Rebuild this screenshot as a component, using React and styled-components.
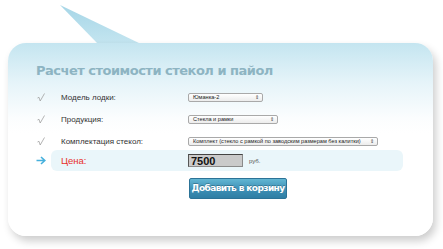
import React from 'react';
import styled, { createGlobalStyle } from 'styled-components';

const GlobalStyle = createGlobalStyle`
  html, body {
    margin: 0;
    padding: 0;
    background: #fff;
    font-family: "Liberation Sans", Arial, sans-serif;
  }
`;

const Page = styled.div`
  position: relative;
  width: 443px;
  height: 249px;
  padding: 43px 0 0 8px;
  box-sizing: border-box;
`;

const Tail = styled.svg`
  position: absolute;
  left: 58px;
  top: 3px;
`;

const Card = styled.div`
  position: relative;
  width: 425px;
  height: 193px;
  box-sizing: border-box;
  padding: 18px 0 0 28px;
  border-radius: 18px;
  background: linear-gradient(#c4e5f0 0, #e6f4f9 40px, #fbfdfe 75px, #fff 90px);
  box-shadow: 3px 5px 9px rgba(0, 0, 0, 0.2);
`;

const Title = styled.h1`
  margin: 0 0 6px;
  height: 19px;
  font-family: "DejaVu Sans", Verdana, sans-serif;
  font-size: 13px;
  font-weight: bold;
  letter-spacing: -0.5px;
  line-height: 19px;
  color: #8db4c2;
`;

const Row = styled.div`
  display: grid;
  grid-template-columns: 25px 127px auto;
  align-items: center;
  height: 22px;
  font-size: 8px;
  color: #333;
`;

const Check = styled.svg`
  display: block;
  margin-left: 1px;
`;

const Select = styled.div`
  display: flex;
  align-items: center;
  justify-content: space-between;
  width: ${p => p.$w}px;
  height: 9px;
  box-sizing: border-box;
  padding: 0 3px 0 4px;
  border: 1px solid #a9a9a9;
  border-radius: 2px;
  background: linear-gradient(#fff, #ececec);
  font-size: 5.6px;
  color: #222;
  white-space: nowrap;
  overflow: hidden;
`;

const SelectArrow = styled.span`
  font-size: 5px;
  line-height: 5px;
  color: #444;
`;

const PriceRow = styled.div`
  display: grid;
  grid-template-columns: 15px 1fr;
  align-items: center;
  margin-top: -2px;
`;

const PriceBand = styled.div`
  display: grid;
  grid-template-columns: 127px auto;
  align-items: center;
  width: 352px;
  height: 21px;
  box-sizing: border-box;
  padding-left: 10px;
  border-radius: 6px;
  background: #eaf6fa;
`;

const PriceLabel = styled.span`
  font-size: 9.5px;
  color: #e8302b;
`;

const PriceValue = styled.div`
  display: flex;
  align-items: center;
  gap: 6px;
`;

const PriceInput = styled.div`
  width: 55px;
  height: 13px;
  box-sizing: border-box;
  padding-left: 2px;
  border: 1px solid #8a8a8a;
  border-top-color: #444;
  border-left-color: #555;
  background: #cacaca;
  font-size: 11px;
  font-weight: bold;
  line-height: 12px;
  color: #111;
`;

const Unit = styled.span`
  font-size: 6px;
  color: #555;
`;

const ButtonWrap = styled.div`
  padding: 6px 0 0 153px;
`;

const Button = styled.button`
  width: 98px;
  height: 21px;
  padding: 0;
  border: 1px solid #2c7397;
  border-radius: 2px;
  background: linear-gradient(#62b6d3, #3d8fb5 55%, #2f7ea4);
  font-family: "DejaVu Sans", Verdana, sans-serif;
  font-size: 9px;
  font-weight: bold;
  letter-spacing: -0.6px;
  white-space: nowrap;
  color: #fff;
  text-shadow: 0 -1px 0 rgba(0, 0, 0, 0.25);
`;

function CheckMark() {
  return (
    <Check width="8" height="9" viewBox="0 0 8 9">
      <path d="M0.5 5 L2 4.3 L3.2 8 L7.5 0.5" fill="none" stroke="#a0a0a0" strokeWidth="0.8" />
    </Check>
  );
}

function Arrow() {
  return (
    <svg width="10" height="9" viewBox="0 0 10 9">
      <path d="M0.5 4.5 H8.5 M5 1 L8.8 4.5 L5 8" fill="none" stroke="#46b0dc" strokeWidth="1.6" />
    </svg>
  );
}

const rows = [
  { label: 'Модель лодки:', value: 'Юманка-2', w: 75 },
  { label: 'Продукция:', value: 'Стекла и рамки', w: 90 },
  { label: 'Комплектация стекол:', value: 'Комплект (стекло с рамкой по заводским размерам без калитки)', w: 190 },
];

export default function App() {
  return (
    <Page>
      <GlobalStyle />
      <Tail width="84" height="42" viewBox="0 0 84 42">
        <defs>
          <linearGradient id="tailGrad" x1="0" y1="0" x2="0" y2="1">
            <stop offset="0" stopColor="#a6d6e7" />
            <stop offset="1" stopColor="#c4e5f0" />
          </linearGradient>
        </defs>
        <polygon points="2,2 40,41 83,41" fill="url(#tailGrad)" />
      </Tail>
      <Card>
        <Title>Расчет стоимости стекол и пайол</Title>
        {rows.map(r => (
          <Row key={r.label}>
            <CheckMark />
            <span>{r.label}</span>
            <Select $w={r.w}>
              <span>{r.value}</span>
              <SelectArrow>⇕</SelectArrow>
            </Select>
          </Row>
        ))}
        <PriceRow>
          <Arrow />
          <PriceBand>
            <PriceLabel>Цена:</PriceLabel>
            <PriceValue>
              <PriceInput>7500</PriceInput>
              <Unit>руб.</Unit>
            </PriceValue>
          </PriceBand>
        </PriceRow>
        <ButtonWrap>
          <Button>Добавить в корзину</Button>
        </ButtonWrap>
      </Card>
    </Page>
  );
}
